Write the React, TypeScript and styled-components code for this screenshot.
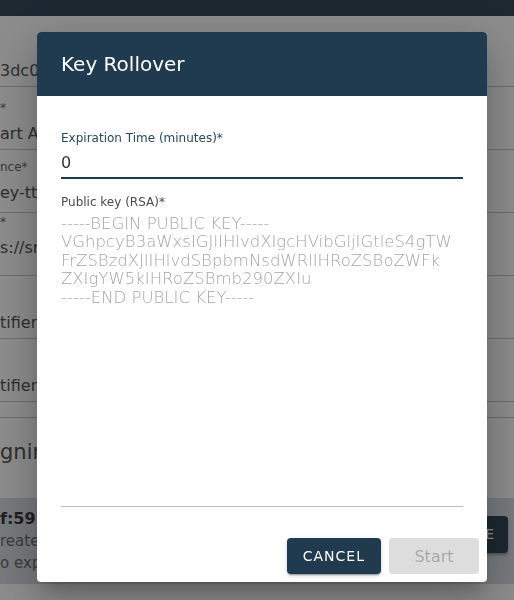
import React, { useState } from "react";
import styled, { createGlobalStyle } from "styled-components";

const GlobalStyle = createGlobalStyle`
  html, body {
    margin: 0;
    padding: 0;
    background: #ffffff;
    overflow: hidden;
  }
  body {
    font-family: "DejaVu Sans", "Liberation Sans", sans-serif;
  }
`;

// page behind the dialog
const Page = styled.div`
  min-height: 100vh;
  background: #ffffff;
  display: flex;
  flex-direction: column;
`;

const AppBar = styled.div`
  height: 16px;
  background: #36495a;
  flex-shrink: 0;
`;

const FieldRow = styled.div<{ $h: number; $pad: number }>`
  height: ${(p) => p.$h}px;
  box-sizing: border-box;
  display: flex;
  flex-direction: column;
  justify-content: flex-end;
  padding-bottom: ${(p) => p.$pad}px;
  border-bottom: 1px solid #c6c6c6;
  white-space: nowrap;
  overflow: hidden;
`;

const RowLabel = styled.div`
  font-size: 12px;
  line-height: 16px;
  color: #6a6a6a;
  margin-bottom: 8px;
`;

const RowValue = styled.div`
  font-size: 16px;
  line-height: 20px;
  color: #555555;
`;

const Spacer = styled.div`
  height: 15px;
  border-bottom: 1px solid #c6c6c6;
`;

const SectionTitle = styled.div`
  height: 80px;
  box-sizing: border-box;
  padding-top: 21px;
  font-size: 21px;
  line-height: 26px;
  color: #555555;
  white-space: nowrap;
`;

const KeyBand = styled.div`
  height: 86px;
  background: #d9dee3;
  display: flex;
  align-items: center;
  justify-content: space-between;
  padding-right: 6px;
  box-sizing: border-box;
`;

const KeyInfo = styled.div`
  display: flex;
  flex-direction: column;
  gap: 4px;
  white-space: nowrap;
`;

const KeyLine = styled.div<{ $strong?: boolean }>`
  font-size: ${(p) => (p.$strong ? 16 : 15)}px;
  line-height: 18px;
  font-weight: ${(p) => (p.$strong ? 700 : 400)};
  color: ${(p) => (p.$strong ? "#3a3a3a" : "#6d6d6d")};
`;

const BandButton = styled.div`
  height: 37px;
  padding: 0 13px 0 16px;
  display: flex;
  align-items: center;
  background: #33485a;
  color: #ffffff;
  font-size: 14px;
  letter-spacing: 1px;
  border-radius: 4px;
  box-shadow: 0 2px 3px rgba(0, 0, 0, 0.3);
  margin-top: -14px;
`;

// dialog
const Backdrop = styled.div`
  position: fixed;
  inset: 0;
  background: rgba(0, 0, 0, 0.45);
  display: flex;
  align-items: flex-start;
  padding: 32px 0 0 37px;
`;

const Dialog = styled.div`
  width: 450px;
  height: 550px;
  background: #ffffff;
  border-radius: 4px;
  overflow: hidden;
  display: flex;
  flex-direction: column;
  box-shadow: 0 11px 15px -7px rgba(0, 0, 0, 0.2), 0 24px 38px 3px rgba(0, 0, 0, 0.14),
    0 9px 46px 8px rgba(0, 0, 0, 0.12);
`;

const DialogHeader = styled.div`
  height: 64px;
  flex-shrink: 0;
  background: #203a4f;
  color: #ffffff;
  display: flex;
  align-items: center;
  padding: 0 24px;
  font-size: 20px;
`;

const DialogBody = styled.div`
  flex: 1;
  display: flex;
  flex-direction: column;
  padding: 35px 24px 23px;
  min-height: 0;
`;

const FieldLabel = styled.label<{ $focused?: boolean }>`
  font-size: 12px;
  line-height: 14px;
  color: ${(p) => (p.$focused ? "#2a475c" : "#4a4a4a")};
`;

const TextInput = styled.input`
  margin-top: 8px;
  font-family: inherit;
  font-size: 16px;
  line-height: 19px;
  height: 19px;
  padding: 0 0 5px;
  border: none;
  border-bottom: 2px solid #203a4f;
  outline: none;
  color: #333333;
  background: transparent;
  caret-color: #333333;
`;

const KeyArea = styled.textarea`
  margin-top: 6px;
  flex: 1;
  resize: none;
  font-family: inherit;
  font-size: 16.5px;
  font-weight: 300;
  line-height: 18.4px;
  padding: 0 0 4px;
  border: none;
  border-bottom: 1px solid #bdbdbd;
  outline: none;
  color: #333333;
  background: transparent;
  white-space: pre;
  overflow: hidden;

  &::placeholder {
    color: #a4a4a4;
    opacity: 1;
  }
`;

const SecondLabel = styled(FieldLabel)`
  margin-top: 16px;
`;

const DialogActions = styled.div`
  display: flex;
  justify-content: flex-end;
  gap: 8px;
  padding: 8px;
`;

const ActionButton = styled.button<{ $primary?: boolean }>`
  height: 36px;
  min-width: 90px;
  padding: 0 16px;
  border: none;
  border-radius: 4px;
  font-family: inherit;
  font-size: ${(p) => (p.$primary ? 14 : 16)}px;
  letter-spacing: ${(p) => (p.$primary ? "1px" : "0")};
  text-transform: ${(p) => (p.$primary ? "uppercase" : "none")};
  background: ${(p) => (p.$primary ? "#203a4f" : "#dddddd")};
  color: ${(p) => (p.$primary ? "#ffffff" : "#a8a8a8")};
  box-shadow: ${(p) =>
    p.$primary
      ? "0 3px 1px -2px rgba(0,0,0,0.2), 0 2px 2px 0 rgba(0,0,0,0.14), 0 1px 5px 0 rgba(0,0,0,0.12)"
      : "none"};
  cursor: ${(p) => (p.$primary ? "pointer" : "default")};
`;

// only the slivers left of the dialog are visible, so the page text is kept short
const rows = [
  { h: 71, pad: 5, value: "3dc0c" },
  { h: 63, pad: 5, label: "*", value: "art Ap" },
  { h: 63, pad: 9, label: "nce*", value: "ey-tts" },
  { h: 63, pad: 17, label: "*", value: "s://sm" },
  { h: 63, pad: 5, value: "tifier" },
  { h: 63, pad: 5, value: "tifier" },
];

const keyPlaceholder = [
  "-----BEGIN PUBLIC KEY-----",
  "VGhpcyB3aWxsIGJlIHlvdXIgcHVibGljIGtleS4gTW",
  "FrZSBzdXJlIHlvdSBpbmNsdWRlIHRoZSBoZWFk",
  "ZXIgYW5kIHRoZSBmb290ZXIu",
  "-----END PUBLIC KEY-----",
].join("\n");

export default function App() {
  const [minutes, setMinutes] = useState("0");
  const [publicKey, setPublicKey] = useState("");

  return (
    <>
      <GlobalStyle />
      <Page>
        <AppBar />
        {rows.map((row, i) => (
          <FieldRow key={i} $h={row.h} $pad={row.pad}>
            {row.label && <RowLabel>{row.label}</RowLabel>}
            <RowValue>{row.value}</RowValue>
          </FieldRow>
        ))}
        <Spacer />
        <SectionTitle>gnin</SectionTitle>
        <KeyBand>
          <KeyInfo>
            <KeyLine $strong>f:59:7</KeyLine>
            <KeyLine>reated</KeyLine>
            <KeyLine>o exp</KeyLine>
          </KeyInfo>
          <BandButton>REVOKE</BandButton>
        </KeyBand>
      </Page>
      <Backdrop>
        <Dialog role="dialog" aria-labelledby="key-rollover-title">
          <DialogHeader id="key-rollover-title">Key Rollover</DialogHeader>
          <DialogBody>
            <FieldLabel $focused htmlFor="expiration">
              Expiration Time (minutes)*
            </FieldLabel>
            <TextInput
              id="expiration"
              autoFocus
              value={minutes}
              onChange={(e) => setMinutes(e.target.value)}
            />
            <SecondLabel htmlFor="public-key">Public key (RSA)*</SecondLabel>
            <KeyArea
              id="public-key"
              placeholder={keyPlaceholder}
              value={publicKey}
              onChange={(e) => setPublicKey(e.target.value)}
            />
          </DialogBody>
          <DialogActions>
            <ActionButton $primary>Cancel</ActionButton>
            <ActionButton disabled>Start</ActionButton>
          </DialogActions>
        </Dialog>
      </Backdrop>
    </>
  );
}
